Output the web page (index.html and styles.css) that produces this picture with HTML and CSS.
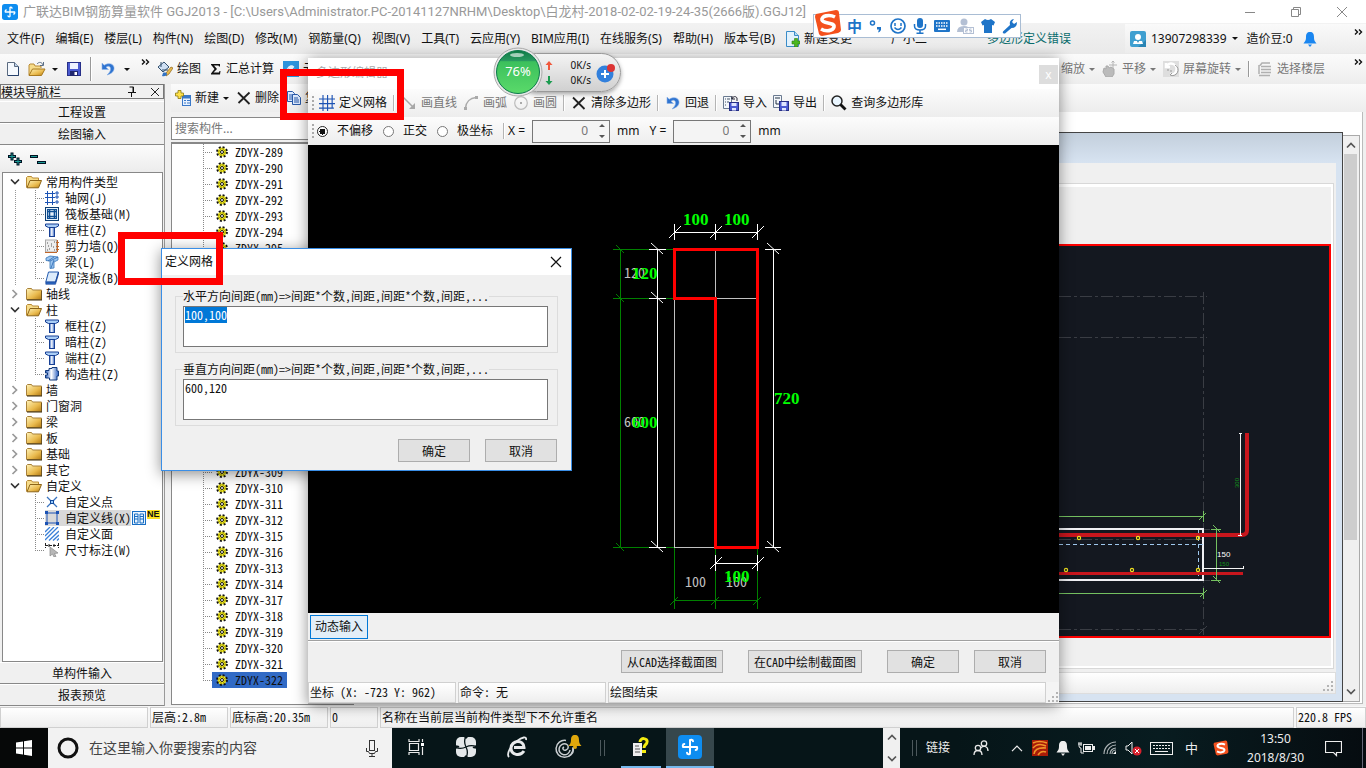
FILE: index.html
```html
<!DOCTYPE html>
<html lang="zh-CN">
<head>
<meta charset="utf-8">
<title>广联达BIM钢筋算量软件 GGJ2013</title>
<link rel="stylesheet" href="styles.css">
</head>
<body>
<svg class="defs" width="0" height="0" aria-hidden="true">
  <defs>
    <linearGradient id="gFold" x1="0" y1="0" x2="1" y2="1"><stop offset="0" stop-color="#fff3b8"/><stop offset=".6" stop-color="#e9b94c"/><stop offset="1" stop-color="#b27a14"/></linearGradient>
    <linearGradient id="gBlue" x1="0" x2="1"><stop offset="0" stop-color="#2a5fc0"/><stop offset=".45" stop-color="#fff"/><stop offset="1" stop-color="#2a5fc0"/></linearGradient>
    <linearGradient id="gBall" x1="0" y1="0" x2="0" y2="1"><stop offset="0" stop-color="#0d7a45"/><stop offset=".24" stop-color="#2a9a60"/><stop offset=".26" stop-color="#3cc05c"/><stop offset="1" stop-color="#5ada6a"/></linearGradient>
  </defs>
  <symbol id="logo" viewBox="0 0 24 24"><rect width="24" height="24" rx="4" fill="#0e8df0"/><path d="M12 5v13M12 5.500c0-1 3-1 3 .8M12 18.500c0 1-3 1-3-.8M5 12h14M5.500 12c-1 0-1-3 .8-3M18.500 12c1 0 1 3-.8 3" fill="none" stroke="#fff" stroke-width="2" stroke-linecap="round"/></symbol>
  <symbol id="gear" viewBox="0 0 12 12"><circle cx="6" cy="6" r="4.500" fill="#f4ec20"/><circle cx="6" cy="6" r="5" fill="none" stroke="#111" stroke-width="1.800" stroke-dasharray="2 1.930"/><circle cx="6" cy="6" r="3.200" fill="none" stroke="#6d6a00" stroke-width="1" stroke-dasharray="1.500 1"/><circle cx="6" cy="6" r="1.500" fill="#fff" stroke="#111"/></symbol>
  <symbol id="fold" viewBox="0 0 16 14"><path d="M.5 12.500v-10l1-1h4l1 1.500h9v9.500z" fill="url(#gFold)" stroke="#a8813a"/><path d="M1 13h15V4" fill="none" stroke="#3a2a08"/></symbol>
  <symbol id="foldo" viewBox="0 0 16 14"><path d="M.5 12.500v-10l1-1h4l1 1.500h6v2" fill="#f6dc8a" stroke="#b98a35"/><path d="M1 12.800L4 5.500h11.500l-3 7.300z" fill="url(#gFold)" stroke="#8c6418"/></symbol>
  <symbol id="open" viewBox="0 0 18 16"><path d="M1 14V4l1-1h4l1 2h6v2" fill="#f6dc8a" stroke="#b98a35"/><path d="M1 14.500L4.500 8H17l-3.500 6.500z" fill="url(#gFold)" stroke="#a87a20"/><path d="M9 3c2-2.500 5-2 6 1M15.500 1v3.500H12" fill="none" stroke="#5b6f86"/></symbol>
  <symbol id="new" viewBox="0 0 12 14"><path d="M.5.500h7l4 4v9H.5z" fill="#f5f9fe" stroke="#5b6b80"/><path d="M7.500.500v4h4" fill="#bcd0ea" stroke="#5b6b80"/><path d="M11.500 5v8.500H1" fill="none" stroke="#25406b"/></symbol>
  <symbol id="save" viewBox="0 0 14 14"><rect x=".5" y=".5" width="13" height="13" fill="#4a5ad0" stroke="#272f88"/><rect x="3" y="1" width="8" height="6" fill="#eef2ff"/><rect x="3" y="9" width="8" height="5" fill="#20276e"/><rect x="7.500" y="10" width="2.500" height="3" fill="#fff"/></symbol>
  <symbol id="undo" viewBox="0 0 14 14"><path d="M1 1v6.500h6.500L5 5.300C7 3.500 9.500 4 9.500 7c0 2.500-1.500 4-3.500 6 5-1.500 7.500-4 7-7.500C12.500 1.500 7.500.500 3.200 3.200z" fill="#2f74d0" stroke="#8db4ea" stroke-width=".6"/></symbol>
  <symbol id="paint" viewBox="0 0 16 16"><path d="M1 6l6-5 5 5-6 5z" fill="#cfe0f4" stroke="#32506e"/><path d="M4 1v5M5 9h6" stroke="#32506e" fill="none"/><path d="M9 12l5-6 2 1-4 6-3 2z" fill="#e9b94c" stroke="#8c6418" stroke-width=".7"/><path d="M6 12c2-1 4 0 4 1s-2 3-5 2" fill="#3273c4"/></symbol>
  <symbol id="sigma" viewBox="0 0 12 12"><path d="M1 1h9v2.500H9L8.500 2.500H4L7 6l-3.500 3.500H9l.5-1.500h1L10 11.500H1V10.500L4.500 6 1 1.800z" fill="#111"/></symbol>
  <symbol id="cloud" viewBox="0 0 16 16"><rect width="16" height="16" fill="#2d93dc"/><path d="M1 12c0-4 3-3 4-6 4-4 8 0 7 3 3 0 3 4 0 4H3z" fill="#dff0fb"/><path d="M5 8l3 3 6-7" fill="none" stroke="#2d93dc" stroke-width="1.500"/></symbol>
  <symbol id="addnew" viewBox="0 0 16 16"><rect x="7.500" y="5.500" width="8" height="10" fill="#e8f2ff" stroke="#3a78c8"/><path d="M7 6h9v2.500H7z" fill="#3a78c8"/><path d="M9 10.500h2m1 0h3m-6 2.500h2m1 0h3" stroke="#3a78c8"/><path d="M3 .5h3v2.500h2.500v3H6v2.500H3V6H.5V3H3z" fill="#ffe14a" stroke="#8c7a10" stroke-width=".8"/></symbol>
  <symbol id="x" viewBox="0 0 14 14"><path d="M1 1.500L12.500 13M12.500 1.500L1.500 12" fill="none" stroke="#222" stroke-width="1.800"/></symbol>
  <symbol id="copy" viewBox="0 0 14 14"><path d="M.5.500h5l2 2v8h-7z" fill="#dceaff" stroke="#2859a8"/><path d="M2 4h4M2 6h4M2 8h4" stroke="#2859a8"/><path d="M5.500 3.500h5l3 3v7h-8z" fill="#dceaff" stroke="#2859a8"/><path d="M7 7h4M7 9h5M7 11h5" stroke="#2859a8"/></symbol>
  <symbol id="grid" viewBox="0 0 14 14"><path d="M3.500 0v14M7.500 0v14M11.500 0v12M0 3.500h14M0 7.500h14M0 11.500h13" fill="none" stroke="#1c53b4"/></symbol>
  <symbol id="axis" viewBox="0 0 14 14"><path d="M2.500 0v14M7.500 0v14M0 2.500h10M0 6.500h10M0 11.500h10" fill="none" stroke="#1c53b4"/><path d="M11 1h2v2h-2zM11 5h2v2h-2zM11 10h2v2h-2z" fill="none" stroke="#1c53b4"/></symbol>
  <symbol id="raft" viewBox="0 0 14 14"><rect x=".5" y=".5" width="13" height="13" fill="#e6f0fa" stroke="#0f3f74"/><path d="M4.500 2v10M9.500 2v10M2 4.500h10M2 9.500h10" fill="none" stroke="#0f4f94" stroke-width="1.600"/><rect x="2.500" y="2.500" width="9" height="9" fill="none" stroke="#0f4f94"/></symbol>
  <symbol id="col" viewBox="0 0 14 14"><rect x="4.500" y="4" width="5" height="9.500" fill="url(#gBlue)" stroke="#173f94"/><path d="M.5 1h13v2l-3 1.500h-7L.5 3z" fill="#a9cdf6" stroke="#173f94"/></symbol>
  <symbol id="wall" viewBox="0 0 14 14"><rect x=".5" y="1" width="11" height="12" fill="#eee" stroke="#aaa"/><path d="M2 4h1m3 1h1m2-2h1M3 7h1m4 1h1m-5 2h1m4 1h1M2 11h1m3-4h1" stroke="#555"/><path d="M0 13.500h12M12.500 1v12M11 3.500h3M11 7.500h3M11 10.500h3" stroke="#c0662a" fill="none"/></symbol>
  <symbol id="beam" viewBox="0 0 14 14"><path d="M1 3l4-2 8 1v3L9 7v6l-4 .5V6L1 5.500z" fill="#9cc6f0" stroke="#3473b8" stroke-width=".8"/><path d="M5 6l8-4M3 6l6-4M6 13l3-8" stroke="#2a66b0" fill="none" stroke-width=".8"/></symbol>
  <symbol id="slab" viewBox="0 0 14 14"><path d="M3.500 1h10L10.500 11H.8z" fill="#dcebfb" stroke="#245cb0"/><path d="M.8 11v2.300h9.700l3-10V1L10.500 11z" fill="#2a66c0" stroke="#173f94" stroke-width=".6"/></symbol>
  <symbol id="gz" viewBox="0 0 14 14"><path d="M4 1.500h3V.5h5v3.500h1.500v5H12v4H4.500v-2H.5v-3h2V6h-2V3.500H4z" fill="url(#gBlue)" stroke="#123a7c"/></symbol>
  <symbol id="pt" viewBox="0 0 14 14"><path d="M2 2l3.500 3.500M12 2L8.500 5.500M2 12l3.500-3.500M12 12L8.500 8.500" stroke="#3a74c0" stroke-width="1.300"/><rect x="5.500" y="5.500" width="3" height="3" fill="#9cf" stroke="#124a9c"/></symbol>
  <symbol id="ln" viewBox="0 0 14 14"><path d="M2 2h10v10H2z" fill="none" stroke="#1c53b4"/><path d="M0 0h3v3H0zM11 0h3v3h-3zM0 11h3v3H0zM11 11h3v3h-3z" fill="#1c53b4"/></symbol>
  <symbol id="area" viewBox="0 0 14 14"><path d="M0 5l5-5M0 9l9-9M0 13L13 0M4 13.500L14 4M8 13.500L14 8M12 13.500l2-2" stroke="#3a80d8" stroke-width="1.300"/></symbol>
  <symbol id="dim" viewBox="0 0 14 14"><path d="M.5 0v5M13.500 0v5M0 2.500h14M4 1v3M9 1v3" stroke="#222" stroke-dasharray="3 1"/><path d="M5 4l8 6-3.500.5 1.500 3-2 .5-1.500-3L5 13z" fill="#b8b8b8" stroke="#888" stroke-width=".7"/></symbol>
  <symbol id="book" viewBox="0 0 14 14"><rect x=".5" y=".5" width="13" height="13" fill="#e8f4ff" stroke="#1a6fc4"/><path d="M2.500 3h3.500v9H2.500zM8 3h3.500v9H8zM2.500 5.500H6M8 5.500h3.500M2.500 8H6M8 8h3.500" fill="none" stroke="#1a6fc4"/></symbol>
  <symbol id="line" viewBox="0 0 14 14"><path d="M1 1l10 10" stroke="#a8a8a8" stroke-width="1.500"/><path d="M13 7v6H7z" fill="#a8a8a8"/></symbol>
  <symbol id="arc" viewBox="0 0 14 14"><path d="M1.500 12C2 6 6 2 12 1.500" fill="none" stroke="#aaa" stroke-width="1.500"/><path d="M0 11h3v3H0zM11 0h3v3h-3z" fill="#aaa"/></symbol>
  <symbol id="circ" viewBox="0 0 14 14"><circle cx="7" cy="7" r="6.300" fill="none" stroke="#bbb" stroke-width="1.200"/><path d="M6 6h2v2H6z" fill="#aaa"/></symbol>
  <symbol id="imp" viewBox="0 0 16 16"><path d="M.5 1.500h8v12h-8z" fill="#f4f7fb" stroke="#6a7a90"/><path d="M2 4h1m1 0h3M2 7h1m1 0h2M2 10h1" stroke="#456"/><rect x="6.500" y="7.500" width="9" height="8" fill="#4a5ad0" stroke="#272f88"/><path d="M8.500 8h5v3h-5zM9 13h4v2.500H9z" fill="#dfe6ff"/><path d="M9 4c1-3 4-3 5-1M9 1v3h3M14 3v3" stroke="#223" fill="none"/></symbol>
  <symbol id="exp" viewBox="0 0 16 16"><path d="M.5.500h8v12h-8z" fill="#f4f7fb" stroke="#6a7a90"/><path d="M2 3h5M3 5v4h5M6 7l2 2-2 2" fill="none" stroke="#234"/><rect x="6.500" y="6.500" width="9" height="9" fill="#4a5ad0" stroke="#272f88"/><path d="M8.500 7h5v4h-5zM9 13h4v2.500H9z" fill="#dfe6ff"/></symbol>
  <symbol id="find" viewBox="0 0 16 16"><circle cx="6" cy="6" r="5" fill="#eaf6ff" stroke="#222" stroke-width="1.500"/><path d="M9.500 9.500l5 5" stroke="#111" stroke-width="2.800"/></symbol>
  <symbol id="hand" viewBox="0 0 16 16"><path d="M2 7l2 1V5h2l1 2 2-1 3 2v5l-2 3H4l-3-5z" fill="#bbb" stroke="#aaa"/><path d="M11 0v8M7 4h8M9.500 1.500L11 0l1.500 1.500" stroke="#b4b4b4" fill="none"/></symbol>
  <symbol id="rot" viewBox="0 0 16 16"><rect width="16" height="16" fill="#dedede"/><path d="M3 6a5.500 5.500 0 1 1 4 7.500M3 2v4h4" fill="none" stroke="#fff" stroke-width="2.500"/><path d="M12 4a5.500 5.500 0 0 1-5 10l2-2M4 9h2m1 1h2" fill="none" stroke="#999"/></symbol>
  <symbol id="floors" viewBox="0 0 16 16"><path d="M3 4.500L5 2h8M4 5.500h10M4 8.500h10M4 11.500h10M2 14.500h11M2 4v9" fill="none" stroke="#b0b0b0" stroke-width="1.500"/></symbol>
  <symbol id="docnew" viewBox="0 0 14 16"><path d="M.5.500h8l4 4v11H.5z" fill="#e2f2fd" stroke="#3a8cc8"/><path d="M8.500.500v4h4" fill="#b4dcf4" stroke="#3a8cc8"/><path d="M8.500 7.500h3v2.500H14v3h-2.500V16h-3v-3H6v-3h2.500z" fill="#4ab820" stroke="#2c7a10" stroke-width=".6"/></symbol>
  <symbol id="user" viewBox="0 0 16 16"><rect width="16" height="16" rx="2" fill="#3f9fd0"/><path d="M8 16l8-7v7z" fill="#2a84b4"/><circle cx="8" cy="6" r="3" fill="#fff"/><path d="M3 13l1-3h8l1 3z" fill="#fff"/><path d="M7 10l1 2 1-2z" fill="#2a84b4"/></symbol>
  <symbol id="bell" viewBox="0 0 14 16"><path d="M7 1c-3 0-4 2-4 5 0 4-1 4-2.500 6.500h13C12 10 11 10 11 6c0-3-1-5-4-5z" fill="currentColor"/><path d="M5 13.500h4L7 16z" fill="currentColor"/></symbol>
  <symbol id="chev" viewBox="0 0 10 8"><path d="M1 1.500l4 4 4-4" fill="none" stroke="currentColor" stroke-width="1.700"/></symbol>
  <symbol id="tri" viewBox="0 0 6 3"><path d="M0 0h6L3 3z" fill="currentColor"/></symbol>
  <symbol id="more" viewBox="0 0 9 6"><path d="M1 .5L3.500 3 1 5.500M5 .5L7.500 3 5 5.500" fill="none" stroke="#111" stroke-width="1.400"/></symbol>
  <symbol id="sogou" viewBox="0 0 28 28"><path d="M2 5L22 1q3 0 3 3l2 17q0 2-3 3L8 27q-2 0-3-2L1 8q0-2 1-3z" fill="#f4511e"/><path d="M21 8C15 5 7 7 8 11s13 2 12 7c-1 4-8 5-13 2" fill="none" stroke="#fff" stroke-width="3.600"/></symbol>
  <symbol id="grip" viewBox="0 0 11 11"><path d="M8 0h2v2H8zM4 4h2v2H4zM8 4h2v2H8zM0 8h2v2H0zM4 8h2v2H4zM8 8h2v2H8z" fill="#b4b4b4"/></symbol>
  <symbol id="updown" viewBox="0 0 6 16"><path d="M0 4l3-3 3 3zM0 12l3 3 3-3z" fill="#555"/></symbol>
</svg>

<div class="desktop">
  <main class="app">
    <header class="titlebar">
      <svg width="16" height="16"><use href="#logo"/></svg>
      <h1>广联达BIM钢筋算量软件 GGJ2013 - [C:\Users\Administrator.PC-20141127NRHM\Desktop\白龙村-2018-02-02-19-24-35(2666版).GGJ12]</h1>
      <div class="winbtns">
        <button aria-label="最小化"><svg width="12" height="12"><path d="M1 6.500h10" stroke="#888"/></svg></button>
        <button aria-label="还原"><svg width="12" height="12"><path d="M1.500 3.500h7v7h-7zM3.500 3V1.500h7v7H9" fill="none" stroke="#888"/></svg></button>
        <button aria-label="关闭"><svg width="12" height="12"><path d="M1 1l10 10M11 1L1 11" stroke="#888"/></svg></button>
      </div>
    </header>

    <nav class="menubar">
      <div class="menus">
        <button>文件(F)</button><button>编辑(E)</button><button>楼层(L)</button><button>构件(N)</button><button>绘图(D)</button><button>修改(M)</button><button>钢筋量(Q)</button><button>视图(V)</button><button>工具(T)</button><button>云应用(Y)</button><button>BIM应用(I)</button><button>在线服务(S)</button><button>帮助(H)</button><button>版本号(B)</button>
        <button class="tb"><svg width="14" height="16"><use href="#docnew"/></svg>新建变更</button>
        <button class="agent">广小二</button>
      </div>
      <div class="notice">多边形定义错误</div>
      <div class="account">
        <svg width="16" height="16"><use href="#user"/></svg><span>13907298339</span>
        <svg width="6" height="3"><use href="#tri"/></svg><span class="beans">造价豆:0</span>
        <svg class="bluebell" width="14" height="16"><use href="#bell"/></svg>
        <svg class="more" width="9" height="6"><use href="#more"/></svg>
      </div>
    </nav>

    <div class="toolbar">
      <div class="group files">
        <button aria-label="新建"><svg width="12" height="14"><use href="#new"/></svg></button>
        <button class="drop" aria-label="打开"><svg width="18" height="16"><use href="#open"/></svg><svg width="6" height="3"><use href="#tri"/></svg></button>
        <button aria-label="保存"><svg width="14" height="14"><use href="#save"/></svg></button>
        <i class="sep"></i>
        <button class="drop wide" aria-label="撤销"><svg width="14" height="14"><use href="#undo"/></svg><svg width="6" height="3"><use href="#tri"/></svg></button>
        <svg class="more" width="9" height="6"><use href="#more"/></svg>
      </div>
      <div class="group calc">
        <button class="tb"><svg width="16" height="16"><use href="#paint"/></svg>绘图</button>
        <button class="tb"><svg width="12" height="12"><use href="#sigma"/></svg>汇总计算</button>
        <button class="tb"><svg width="16" height="16"><use href="#cloud"/></svg>云检查</button>
      </div>
      <div class="group view">
        <button class="tb off">缩放<svg width="6" height="3"><use href="#tri"/></svg></button>
        <button class="tb off"><svg width="16" height="16"><use href="#hand"/></svg>平移<svg width="6" height="3"><use href="#tri"/></svg></button>
        <button class="tb off"><svg width="16" height="16"><use href="#rot"/></svg>屏幕旋转<svg width="6" height="3"><use href="#tri"/></svg></button>
        <i class="sep"></i>
        <button class="tb off"><svg width="16" height="16"><use href="#floors"/></svg>选择楼层</button>
        <svg class="more" width="9" height="6"><use href="#more"/></svg>
      </div>
    </div>

    <div class="work">
      <aside class="navpane">
        <div class="navhead"><h2 class="song">模块导航栏</h2>
          <svg width="8" height="11"><path d="M1.500 1h4v5M5 1v5M0 6.500h8M3.500 7v4" fill="none" stroke="#111"/></svg>
          <svg width="10" height="10"><path d="M1 1l8 8M9 1L1 9" stroke="#222"/></svg></div>
        <button class="navbtn song">工程设置</button>
        <button class="navbtn song">绘图输入</button>
        <div class="plusbar">
          <svg width="18" height="16"><path d="M2 5.500h8M6 1.500v8M8 10.500h8M12 6.500v8" stroke="#012" stroke-width="3"/><path d="M3 5.500h6M6 2.500v6M9 10.500h6M12 7.500v6" stroke="#1a9a94"/></svg>
          <svg width="18" height="16"><path d="M1 5.500h8M8 11.500h9" stroke="#012" stroke-width="3"/><path d="M2 5.500h6M9 11.500h7" stroke="#1a9a94"/></svg>
        </div>
        <ul class="tree song">
          <li><div class="row"><svg class="ex" width="10" height="8"><use href="#chev"/></svg><svg width="16" height="14"><use href="#foldo"/></svg><span>常用构件类型</span></div>
            <ul class="run">
              <li><i class="conn"></i><svg width="14" height="14"><use href="#axis"/></svg><span>轴网(J)</span></li>
              <li><i class="conn"></i><svg width="14" height="14"><use href="#raft"/></svg><span>筏板基础(M)</span></li>
              <li><i class="conn"></i><svg width="14" height="14"><use href="#col"/></svg><span>框柱(Z)</span></li>
              <li><i class="conn"></i><svg width="14" height="14"><use href="#wall"/></svg><span>剪力墙(Q)</span></li>
              <li><i class="conn"></i><svg width="14" height="14"><use href="#beam"/></svg><span>梁(L)</span></li>
              <li><i class="conn"></i><svg width="14" height="14"><use href="#slab"/></svg><span>现浇板(B)</span></li>
            </ul></li>
          <li><div class="row"><svg class="ex shut" width="10" height="8"><use href="#chev"/></svg><svg width="16" height="14"><use href="#fold"/></svg><span>轴线</span></div></li>
          <li><div class="row"><svg class="ex" width="10" height="8"><use href="#chev"/></svg><svg width="16" height="14"><use href="#foldo"/></svg><span>柱</span></div>
            <ul class="run">
              <li><i class="conn"></i><svg width="14" height="14"><use href="#col"/></svg><span>框柱(Z)</span></li>
              <li><i class="conn"></i><svg width="14" height="14"><use href="#col"/></svg><span>暗柱(Z)</span></li>
              <li><i class="conn"></i><svg width="14" height="14"><use href="#col"/></svg><span>端柱(Z)</span></li>
              <li><i class="conn"></i><svg width="14" height="14"><use href="#gz"/></svg><span>构造柱(Z)</span></li>
            </ul></li>
          <li><div class="row"><svg class="ex shut" width="10" height="8"><use href="#chev"/></svg><svg width="16" height="14"><use href="#fold"/></svg><span>墙</span></div></li>
          <li><div class="row"><svg class="ex shut" width="10" height="8"><use href="#chev"/></svg><svg width="16" height="14"><use href="#fold"/></svg><span>门窗洞</span></div></li>
          <li><div class="row"><svg class="ex shut" width="10" height="8"><use href="#chev"/></svg><svg width="16" height="14"><use href="#fold"/></svg><span>梁</span></div></li>
          <li><div class="row"><svg class="ex shut" width="10" height="8"><use href="#chev"/></svg><svg width="16" height="14"><use href="#fold"/></svg><span>板</span></div></li>
          <li><div class="row"><svg class="ex shut" width="10" height="8"><use href="#chev"/></svg><svg width="16" height="14"><use href="#fold"/></svg><span>基础</span></div></li>
          <li><div class="row"><svg class="ex shut" width="10" height="8"><use href="#chev"/></svg><svg width="16" height="14"><use href="#fold"/></svg><span>其它</span></div></li>
          <li><div class="row"><svg class="ex" width="10" height="8"><use href="#chev"/></svg><svg width="16" height="14"><use href="#foldo"/></svg><span>自定义</span></div>
            <ul>
              <li><i class="conn"></i><svg width="14" height="14"><use href="#pt"/></svg><span>自定义点</span></li>
              <li class="cur"><i class="conn"></i><div class="hl"><svg width="14" height="14"><use href="#ln"/></svg><span>自定义线(X)</span></div><svg width="14" height="14"><use href="#book"/></svg><b class="newtag">NE</b></li>
              <li><i class="conn"></i><svg width="14" height="14"><use href="#area"/></svg><span>自定义面</span></li>
              <li><i class="conn"></i><svg width="14" height="14"><use href="#dim"/></svg><span>尺寸标注(W)</span></li>
            </ul></li>
        </ul>
        <button class="navbtn song">单构件输入</button>
        <button class="navbtn song">报表预览</button>
      </aside>

      <div class="stage">
        <div class="toolbar listbar">
          <button class="tb"><svg width="16" height="16"><use href="#addnew"/></svg>新建<svg width="6" height="3"><use href="#tri"/></svg></button>
          <button class="tb"><svg width="14" height="14"><use href="#x"/></svg>删除</button>
          <button class="tb"><svg width="14" height="14"><use href="#copy"/></svg>复制</button>
        </div>
        <div class="split">
          <section class="listpane">
            <input class="search" type="text" placeholder="搜索构件..." aria-label="搜索构件">
            <ul class="list song" id="componentList"></ul>
          </section>
          <section class="mdi">
            <div class="child">
              <div class="childbody">
                <div class="sheet">
                  <div class="cad">
                    <svg width="270" height="390" viewBox="1059 246 270 390" aria-label="截面配筋图">
                      <g fill="none" stroke="#3a3d44" stroke-dasharray="12 3 3 3"><path d="M1059 296.500h148M1059 337.500h148M1203.500 292v343M1059 539.500h144M1059 629.500h144"/></g>
                      <path d="M1199 634l8-8M1204 529.500h6M1204 580.500h6" stroke="#3a3d44"/>
                      <path d="M1059 529h144v51h-144" fill="none" stroke="#f0f0f4" stroke-width="2"/>
                      <path d="M1059 544.500h144M1198.500 530v50" fill="none" stroke="#9fc8ee" stroke-dasharray="4 3"/>
                      <path d="M1059 535h183q5 0 5-5v-97" fill="none" stroke="#c8161d" stroke-width="4"/>
                      <path d="M1059 573.500h184" stroke="#c8161d" stroke-width="3"/>
                      <path d="M1059 516.500h145M1203.500 511v11M1199 520l7-7M1059 593.500h145M1203.500 588v11M1200 597l7-7M1216.500 529v51M1211 529.500h10M1211 580.500h10M1213 525l7 7M1213 576l7 7" fill="none" stroke="#74c060"/>
                      <path d="M1240.500 433v102M1239 433.500h3M1238 535.500h4M1204 568.500h40M1203.500 566v5M1243.500 566v3" fill="none" stroke="#f4f4f4"/>
                      <g fill="none" stroke="#f0e020" stroke-width="1.200"><circle cx="1079" cy="538" r="1.600"/><circle cx="1138" cy="538" r="1.600"/><circle cx="1198" cy="538" r="1.600"/><circle cx="1066" cy="570" r="1.600"/><circle cx="1132" cy="570" r="1.600"/><circle cx="1198" cy="570" r="1.600"/></g>
                      <text x="1217" y="557" class="c8">150</text>
                      <text x="1219" y="566" class="c6">150</text>
                      <text x="1239" y="488" class="c6" transform="rotate(-90 1239 488)">300</text>
                    </svg>
                  </div>
                </div>
                <div class="childstatus"><svg width="11" height="11"><use href="#grip"/></svg></div>
              </div>
            </div>
            <div class="scroll">
              <button aria-label="向上滚动"><svg class="up" width="10" height="8"><use href="#chev"/></svg></button>
              <div class="thumb"></div>
              <button aria-label="向下滚动"><svg width="10" height="8"><use href="#chev"/></svg></button>
            </div>
          </section>
        </div>
      </div>
    </div>

    <footer class="status song">
      <span class="s1"></span><span class="s2">层高:2.8m</span><span class="s3">底标高:20.35m</span><span class="s4">0</span><span class="grow">名称在当前层当前构件类型下不允许重名</span><span class="s5">220.8 FPS</span>
    </footer>
  </main>

  <footer class="taskbar">
    <button class="start" aria-label="开始"><svg width="16" height="16"><path d="M0 2.500L7 1.500v6H0zM8 1.300L16 0v7.500H8zM0 8.500h7v6L0 13.500zM8 8.500h8V16l-8-1.200z" fill="#fff"/></svg></button>
    <label class="cortana"><svg width="22" height="22"><circle cx="11" cy="11" r="9" fill="none" stroke="#111" stroke-width="3"/></svg><input type="text" placeholder="在这里输入你要搜索的内容">
      <svg width="12" height="17"><rect x="3.500" y=".5" width="5" height="10" fill="none" stroke="#333"/><path d="M.5 8v3.500h2l1 2h5l1-2h2V8M6 14v2.500M3 16.500h6" fill="none" stroke="#333"/></svg></label>
    <div class="apps">
      <button aria-label="任务视图"><svg width="18" height="16"><path d="M2.500 4.500h9v7h-9zM2 0v2.500h10V0M2 16v-2.500h10V16M15.500 0v3M15.500 8v8" fill="none" stroke="#e8e8e8" stroke-width="1.200"/><path d="M14 4h3v3h-3z" fill="#fff"/></svg></button>
      <button aria-label="四叶草"><svg width="22" height="22"><rect x="1" y="1" width="20" height="20" rx="5" fill="#e4e8ea"/><path d="M11 0c-2 4-2 7 0 11s2 7 0 11M0 11c4 2 7 2 11 0s7-2 11 0M1 11c1-1 2-1 3 0M18 11c1 1 2 1 3 0" fill="none" stroke="#061518" stroke-width="1.300"/><path d="M11 0l2 1-2 2-2-2zM11 22l2-1-2-2-2 2zM0 11l1 2 2-2-2-2zM22 11l-1 2-2-2 2-2z" fill="#061518"/></svg></button>
      <button aria-label="浏览器"><svg width="22" height="22"><path d="M18 15c-4 6-13 4-13-3 0-8 13-9 13-.5H8" fill="none" stroke="#e8eaec" stroke-width="3"/><path d="M3 21c-3-3 2-12 8-16 5-4 10-5 9-1" fill="none" stroke="#e8eaec" stroke-width="1.800"/></svg></button>
      <button aria-label="安全浏览"><svg width="28" height="26"><g fill="none" stroke="#c8cdd0" stroke-width="1.500"><path d="M19 14a8.500 8.500 0 1 1-7-7.500"/><path d="M16 16a5.500 5.500 0 1 1-4-6c3 1 3 5 0 6s-4-2-2-3"/><path d="M15 22c4-2 5-5 4-9"/></g><g fill="#e0a80c"><path d="M21 1c-3 0-4 2-4 5 0 3-1 4-2.500 6h13C26 10 25 9 25 6c0-3-1-5-4-5z"/><circle cx="21" cy="13" r="2"/></g></svg></button>
      <i class="bars"></i>
      <button class="run" aria-label="帮助文档"><svg width="18" height="20"><path d="M1 6h9v13H1z" fill="#eee"/><path d="M3 9h4M3 12h5M3 15h5" stroke="#555"/><path d="M8 5c0-5 8-4 7 0 0 3-3 2-3 6" fill="none" stroke="#f4ec10" stroke-width="3"/><path d="M10 13h4v3h-4z" fill="#f4ec10"/></svg></button>
      <button class="run on" aria-label="GGJ2013"><svg width="24" height="24"><use href="#logo"/></svg></button>
    </div>
    <div class="tscroll"><svg class="up" width="10" height="8"><use href="#chev"/></svg><svg width="10" height="8"><use href="#chev"/></svg></div>
    <div class="tray">
      <i class="bars"></i><span class="links">链接</span>
      <svg width="16" height="16"><g fill="none" stroke="#e8e8e8" stroke-width="1.300"><circle cx="11" cy="3.500" r="2.700"/><circle cx="5" cy="8" r="2.700"/><path d="M1 15c0-6 8-6 8 0M8 8c2-3 7-2 7 3"/></g></svg>
      <svg class="up" width="14" height="10" viewBox="0 0 10 8"><path d="M1 1.500l4 4 4-4" fill="none" stroke="#eee"/></svg>
      <svg width="16" height="16"><rect width="16" height="16" fill="#a81c08"/><path d="M1 3q6-3 14 0M1 8q5-6 13-2M2 14q1-7 12-6M6 15q3-5 8-3" fill="none" stroke="#f0962a" stroke-width="1.500"/></svg>
      <svg width="14" height="16"><use href="#bell"/></svg>
      <svg width="17" height="14"><path d="M0 3h4M1 1v4q0 2 2 2v5h3M3 1v4" fill="none" stroke="#eee"/><rect x="5.500" y="3.500" width="9" height="7" fill="none" stroke="#eee"/><path d="M7 5h6v4H7zM15 5h2v4h-2z" fill="#eee"/></svg>
      <svg width="14" height="14"><path d="M1 13A12 12 0 0 1 13 1M4 13a9 9 0 0 1 9-9M7 13a6 6 0 0 1 6-6M9 13a4 4 0 0 1 4-4" fill="none" stroke="#aeb4b6" stroke-width="1.200"/><path d="M10 13h3v-3z" fill="#fff"/></svg>
      <svg width="17" height="15"><path d="M1 5h2l4-4v12L3 9H1z" fill="none" stroke="#eee"/><circle cx="12" cy="10" r="4.500" fill="#d8202c"/><path d="M10 8l4 4M14 8l-4 4" stroke="#fff"/></svg>
      <svg width="23" height="13"><rect x=".5" y=".5" width="22" height="12" fill="none" stroke="#eee"/><path d="M3 3.500h17M3 6.500h17" stroke="#eee" stroke-dasharray="2 1"/><path d="M5 9.500h13" stroke="#eee"/></svg>
      <span class="ime">中</span>
      <svg width="16" height="16"><use href="#sogou"/></svg>
      <div class="clock"><time>13:50</time><span>2018/8/30</span></div>
      <svg width="17" height="17"><path d="M.5 1.500h16v11h-5v3l-3-3h-8z" fill="none" stroke="#eee" stroke-width="1.200"/></svg>
      <i class="peek"></i>
    </div>
  </footer>

  <section class="editor" role="dialog" aria-label="多边形编辑器">
    <header><h2>多边形编辑器</h2><button aria-label="关闭">x</button></header>
    <div class="edbar">
      <i class="dots"></i>
      <button class="tb"><svg width="16" height="16"><use href="#grid"/></svg>定义网格</button><i class="sep"></i>
      <button class="tb off"><svg width="16" height="14"><use href="#line"/></svg>画直线</button>
      <button class="tb off"><svg width="16" height="14"><use href="#arc"/></svg>画弧</button>
      <button class="tb off"><svg width="16" height="14"><use href="#circ"/></svg>画圆</button><i class="sep"></i>
      <button class="tb"><svg width="16" height="14"><use href="#x"/></svg>清除多边形</button><i class="sep"></i>
      <button class="tb"><svg width="16" height="14"><use href="#undo"/></svg>回退</button><i class="sep"></i>
      <button class="tb"><svg width="16" height="16"><use href="#imp"/></svg>导入</button>
      <button class="tb"><svg width="16" height="16"><use href="#exp"/></svg>导出</button><i class="sep"></i>
      <button class="tb"><svg width="16" height="16"><use href="#find"/></svg>查询多边形库</button>
    </div>
    <div class="edbar coords">
      <i class="dots"></i>
      <label><input type="radio" name="mode" checked>不偏移</label>
      <label><input type="radio" name="mode">正交</label>
      <label><input type="radio" name="mode">极坐标</label>
      <i class="sep"></i>
      <label class="axis">X = <span class="spin"><input type="text" value="0" disabled><svg width="8" height="20" viewBox="0 -2 6 20"><use href="#updown" width="6" height="16"/></svg></span>mm</label>
      <label class="axis">Y = <span class="spin"><input type="text" value="0" disabled><svg width="8" height="20" viewBox="0 -2 6 20"><use href="#updown" width="6" height="16"/></svg></span>mm</label>
    </div>
    <div class="canvas">
      <svg width="751" height="468" viewBox="308 145 751 468" aria-label="多边形截面">
        <g fill="none" stroke="#008000">
          <path d="M613 249.500h61M613 298.500h61M613 547.500h61M620.500 249v299M674.500 548v61M715.500 548v61M757.500 548v61M674 600.500h84"/>
          <path d="M616 245l8 8M616 294l8 8M616 543l8 8M670 605l8-8M711 605l8-8M753 605l8-8"/>
        </g>
        <path d="M674.500 298v250M715.500 249v49M715 298.500h42M674 547.500h42" fill="none" stroke="#c0c0c0"/>
        <g class="gray"><text x="624" y="278">120</text><text x="624" y="427">600</text><text x="685" y="587">100</text><text x="726" y="587">100</text></g>
        <g fill="none" stroke="#fff">
          <path d="M674 232.500h84M674.500 224v16M715.500 224v16M757.500 224v16M657.500 249v299M649 249.500h17M649 298.500h17M649 547.500h17M773.500 249v299M765 249.500h16M765 547.500h16M715 563.500h43M715.500 555v16M757.500 555v16"/>
          <path d="M669 238l12-12M710 238l12-12M752 238l12-12M651 243l12 11M651 292l12 11M651 541l12 11M767 243l12 11M767 541l12 11M710 569l12-12M752 569l12-12"/>
        </g>
        <path d="M674.500 249.500h83v298h-42v-249h-41z" fill="none" stroke="#f00" stroke-width="3"/>
        <g class="green"><text x="683" y="225">100</text><text x="724" y="225">100</text><text x="632" y="279">120</text><text x="632" y="428">600</text><text x="774" y="404">720</text><text x="724" y="582">100</text></g>
      </svg>
    </div>
    <div class="dyn"><button>动态输入</button></div>
    <div class="actions song">
      <button>从CAD选择截面图</button><button>在CAD中绘制截面图</button><button class="std">确定</button><button class="std">取消</button>
    </div>
    <div class="edstatus song"><span class="e1">坐标 (X: -723 Y: 962)</span><span class="e1">命令: 无</span><span class="grow">绘图结束</span><svg width="11" height="11"><use href="#grip"/></svg></div>
  </section>

  <form class="griddlg song" role="dialog" aria-label="定义网格">
    <header><h2>定义网格</h2><button type="button" aria-label="关闭"><svg width="12" height="12"><path d="M1 1l10 10M11 1L1 11" stroke="#111" stroke-width="1.200"/></svg></button></header>
    <fieldset><legend><label for="hgap">水平方向间距(mm)=&gt;间距*个数,间距,间距*个数,间距,...</label></legend><textarea id="hgap" class="song" spellcheck="false">100,100</textarea></fieldset>
    <fieldset><legend><label for="vgap">垂直方向间距(mm)=&gt;间距*个数,间距,间距*个数,间距,...</label></legend><textarea id="vgap" class="song" spellcheck="false">600,120</textarea></fieldset>
    <div class="btns"><button type="button">确定</button><button type="button">取消</button></div>
  </form>

  <div class="mark mark-a"></div>
  <div class="mark mark-b"></div>

  <div class="netball">
    <div class="pill">
      <div class="rates"><span><svg width="8" height="9"><path d="M4 0l3.500 4H5v5H3V4H.5z" fill="#f0583c"/></svg>0K/s</span><span><svg width="8" height="9"><path d="M4 9l3.500-4H5V0H3v5H.5z" fill="#1c9c50"/></svg>0K/s</span></div>
      <svg width="22" height="22"><circle cx="10" cy="12" r="8.500" fill="#3280dc"/><path d="M10 8v8M6 12h8" stroke="#fff" stroke-width="2"/><circle cx="16" cy="6" r="4" fill="#dc3434"/></svg>
    </div>
    <svg class="ball" width="50" height="50"><circle cx="25" cy="25" r="24" fill="#e8e8e8" stroke="#aaa"/><circle cx="25" cy="25" r="21.500" fill="url(#gBall)" stroke="#0d7a4c"/><ellipse cx="24" cy="8" rx="7" ry="2" fill="#fff" opacity=".6"/><text x="25" y="29" text-anchor="middle">76%</text></svg>
  </div>

  <div class="imebar">
    <svg width="28" height="28"><use href="#sogou"/></svg>
    <span>中</span>
    <svg width="14" height="14"><circle cx="3.500" cy="4" r="2" fill="none" stroke="#1e74c8" stroke-width="1.500"/><path d="M8 8h4v3q-1 2-3 2.500l1-3H8z" fill="#1e74c8"/></svg>
    <svg width="16" height="16"><circle cx="8" cy="8" r="7" fill="none" stroke="#1e74c8" stroke-width="1.700"/><path d="M5 5v3M11 5v3M4.500 9.500q3.500 4 7 0" fill="none" stroke="#1e74c8" stroke-width="1.500"/></svg>
    <svg width="14" height="16"><rect x="4" y="0" width="6" height="10" rx="3" fill="#1e74c8"/><path d="M1.500 6v2q0 4 5.500 4t5.500-4V6M7 12v3M3.500 15.200h7" fill="none" stroke="#1e74c8" stroke-width="1.500"/></svg>
    <svg width="16" height="12"><rect width="16" height="12" rx="1" fill="#1e74c8"/><path d="M2 3h12M2 6h12" stroke="#fff" stroke-width="1.500" stroke-dasharray="1.500 1"/><path d="M4 9.300h8" stroke="#fff" stroke-width="1.500"/></svg>
    <svg width="17" height="16"><g fill="#b4c0d4"><circle cx="7" cy="4" r="3.500"/><path d="M0 14q0-6 7-6 3 0 4 1H6v5z"/></g><rect x="6.500" y="9.500" width="10" height="6" fill="#fff" stroke="#b4c0d4"/><path d="M8.500 11h2v1.500h-2V14h2M14.500 11h-2v1.500h2V14h-2" fill="none" stroke="#b4c0d4"/></svg>
    <svg width="14" height="14"><path d="M4 0q3 2 6 0l4 3-1.500 3.500L11 6v8H3V6l-1.500.5L0 3z" fill="#1e74c8"/></svg>
    <svg width="15" height="15"><path d="M1 12.500L8 6q-1-4 2-5.500L12 0l-2 3 2 2 3-2q0 6-5.500 6L3 14.500q-3 0-2-2z" fill="#1e74c8"/></svg>
  </div>
</div>
<script src="main.js"></script>
</body>
</html>
```
FILE: main.js
```js
const order = [];
for (let n = 289; n <= 312; n++) order.push(n);
order.push(315, 316, 313, 314, 317, 318, 319, 320, 321, 322);

const list = document.getElementById('componentList');
list.innerHTML = order.map((n) =>
  `<li${n === 322 ? ' class="sel"' : ''}><i class="conn"></i><div class="item"><svg width="12" height="12"><use href="#gear"/></svg><span>ZDYX-${n}</span></div></li>`
).join('');

const first = document.getElementById('hgap');
first.focus();
first.select();
```
FILE: styles.css
```css
* { box-sizing: border-box; }
body { margin: 0; font: 12px/16px "Noto Sans", "Noto Sans CJK SC", sans-serif; color: #111; overflow: hidden; }
h1, h2, ul { margin: 0; padding: 0; font-size: 12px; font-weight: 400; list-style: none; }
button, input, textarea { font: inherit; color: inherit; margin: 0; }
button { border: 0; padding: 0; background: none; white-space: nowrap; }
svg { flex: none; display: block; }
.defs { position: absolute; }
.song { font-family: "Noto Sans CJK SC", sans-serif; font-feature-settings: "hwid"; }
.grow { flex: 1; }
.up { transform: rotate(180deg); }

.desktop { position: relative; height: 100vh; display: flex; flex-direction: column; }
.app { flex: 1; min-height: 0; display: flex; flex-direction: column; background: #f0f0f0; }

.titlebar { height: 23px; background: #fff; display: flex; align-items: center; gap: 5px; padding-left: 2px; color: #999; }
.titlebar h1 { flex: 1; white-space: nowrap; font-family: Roboto, "Noto Sans CJK SC", sans-serif; font-size: 13px; }
.winbtns { display: flex; gap: 34px; padding-right: 18px; }

.menubar { height: 31px; display: flex; align-items: center; background: linear-gradient(#f2f2f2, #e9e9e9); white-space: nowrap; }
.menus { display: flex; gap: 11px; padding-left: 7px; flex: 1; align-items: center; }
.agent { margin-left: 28px; }
.notice { color: #0a6c6c; padding-right: 54px; }
.account { display: flex; align-items: center; gap: 5px; height: 29px; width: 241px; padding-left: 5px; background: linear-gradient(#fafafa, #ececec); }
.beans { margin-left: 4px; }
.bluebell { color: #1a86f0; margin-left: 5px; }
.more { margin-left: auto; margin-right: 3px; align-self: flex-start; margin-top: 5px; }

.toolbar { height: 30px; display: flex; align-items: center; background: linear-gradient(#fbfbfb, #ededed); }
.group { display: flex; align-items: center; height: 100%; gap: 9px; }
.files { width: 153px; padding-left: 7px; }
.drop { display: flex; align-items: center; gap: 6px; }
.drop.wide { gap: 9px; }
.calc { flex: 1; padding-left: 4px; }
.view { width: 305px; gap: 7px; }
.tb { display: flex; align-items: center; gap: 4px; }
.off { color: #777; }
.sep { width: 2px; height: 16px; flex: none; background: #b4b4b4; border-right: 1px solid #fff; }
.toolbar .sep { height: 24px; background: #999; }
.view .sep { height: 16px; }

.work { flex: 1; min-height: 0; display: flex; }
.navpane { width: 165px; display: flex; flex-direction: column; border-right: 1px solid #999; }
.navhead { height: 15px; display: flex; align-items: center; border: 1px solid #777; padding-right: 3px; margin-bottom: 2px; gap: 14px; }
.navhead h2 { flex: 1; line-height: 13px; }
.navbtn { height: 22px; background: #f0f0f0; border-top: 1px solid #fff; border-bottom: 1px solid #888; }
.plusbar { height: 27px; display: flex; gap: 5px; align-items: center; padding-left: 6px; background: linear-gradient(#fcfcfc, #ececec); }
.tree { flex: 1; min-height: 0; overflow: hidden; background: #fff; border: 1px solid #888; margin: 0 1px 0 2px; padding-top: 1px; white-space: nowrap; }
.row, .tree ul li { display: flex; align-items: center; height: 16px; gap: 6px; }
.row { padding-left: 7px; gap: 4px; }
.ex { color: #333; margin-right: 2px; }
.ex.shut { transform: rotate(-90deg); color: #999; }
.tree ul { padding-left: 32px; }
.tree ul.run { background: repeating-linear-gradient(#999 0 1px, #fff 1px 2px) 12px 0 / 1px 100% no-repeat; }
.tree .conn { width: 9px; margin-right: -5px; }
.conn { height: 16px; flex: none; background: repeating-linear-gradient(#888 0 1px, transparent 1px 2px) 0 0 / 1px 100% no-repeat, repeating-linear-gradient(90deg, #888 0 1px, transparent 1px 2px) 0 8px / 100% 1px no-repeat; }
ul li:last-child > .conn { background-size: 1px 8px, 100% 1px; }
.tree ul .cur { gap: 1px; }
.tree .cur .conn { margin-right: 0; }
.hl { display: flex; align-items: center; gap: 6px; background: #d9d9d9; height: 16px; }
.newtag { background: #fbe122; font: bold 9px/9px "Liberation Sans", sans-serif; align-self: flex-start; }

.stage { flex: 1; min-width: 0; display: flex; flex-direction: column; padding-left: 6px; }
.listbar { height: 28px; gap: 8px; padding-left: 4px; }
.split { flex: 1; min-height: 0; display: flex; }
.listpane { width: 183px; display: flex; flex-direction: column; gap: 2px; padding: 5px 0 1px; }
.search { height: 23px; border: 1px solid #888; background: #fff; padding: 0 3px; width: 100%; }
.search::placeholder { color: #777; opacity: 1; }
.list { flex: 1; overflow: hidden; background: #fff; border: 1px solid #888; border-top-width: 2px; padding: 0 0 0 31px; }
.list li { display: flex; height: 16px; }
.list .conn { width: 9px; }
.item { display: flex; align-items: center; gap: 7px; padding: 0 4px; }
.sel .item { background: #316ac5; }

.mdi { flex: 1; display: flex; margin: 0 3px 2px 6px; padding: 20px 2px 1px 0; background: #fff; border-right: 1px solid #bbb; border-bottom: 1px solid #bbb; }
.child { flex: 1; display: flex; border: solid #444; border-width: 1px 1px 1px 0; background: linear-gradient(#c3cfdc, #d7e3f1 30px); padding: 30px 6px 7px 0; }
.childbody { flex: 1; display: flex; flex-direction: column; background: #f0f0f0; padding-top: 20px; }
.sheet { flex: 1; border: solid #d8d8d8; border-width: 1px 1px 1px 0; margin-right: 2px; box-shadow: inset 0 3px #fff, inset -2px 0 #fff, inset 0 -2px #fff; padding: 60px 2px 30px 0; display: flex; flex-direction: column; margin-bottom: 3px; }
.cad { flex: 1; min-height: 0; overflow: hidden; background: #141820; border: 2px solid #f00; display: flex; justify-content: flex-end; }
.c8 { font: 8px "Liberation Sans", sans-serif; fill: #fff; }
.c6 { font: 6px "Liberation Sans", sans-serif; fill: #12921c; }
.childstatus { height: 22px; background: linear-gradient(#fff, #eee); border: 1px solid #ddd; display: flex; justify-content: flex-end; align-items: flex-end; padding: 1px; }
.scroll { width: 17px; display: flex; flex-direction: column; background: #f0f0f0; border: solid #aaa; border-width: 1px 1px 1px 0; margin-top: 3px; color: #555; }
.scroll button { height: 18px; display: grid; place-items: center; }
.thumb { flex: 1; background: #cdcdcd; margin: 0 2px 143px 1px; }

.status { display: flex; height: 22px; background: #f6f6f6; gap: 2px; padding-top: 1px; }
.status span, .edstatus > span { border: 1px solid #d0d0d0; background: linear-gradient(#fff, #eee); padding-left: 1px; line-height: 18px; white-space: nowrap; }
.s1 { width: 148px; } .s2 { width: 78px; } .s3 { width: 98px; } .s4 { width: 48px; } .s5 { width: 70px; }

.taskbar { height: 40px; display: flex; background: linear-gradient(90deg, #061518 70%, #081c20 85%, #060c10); color: #eee; }
.taskbar button { display: grid; place-items: center; }
.start { width: 48px; background: #060808; }
.cortana { width: 344px; background: #f2f2f2; display: flex; align-items: center; gap: 10px; padding: 0 14px 0 9px; color: #333; }
.cortana input { flex: 1; min-width: 0; border: 0; background: none; font-size: 14px; padding: 0; }
.cortana input::placeholder { color: #444; opacity: 1; }
.apps { flex: 1; display: flex; align-items: stretch; }
.apps button { width: 51px; border-bottom: 2px solid transparent; }
.apps button:first-child { width: 48px; }
.bars { width: 5px; height: 16px; align-self: center; border: solid #4c585c; border-width: 0 1px; flex: none; }
.apps .bars { margin: 0 16px 0 7px; }
.apps .run { width: 40px; border-color: #76b9ed; margin-right: 5px; }
.apps .run.on { width: 48px; background: #36474c; }
.tscroll { width: 17px; background: #f0f0f0; color: #555; display: flex; flex-direction: column; justify-content: space-between; align-items: center; padding: 5px 0; }
.tray { width: 466px; display: flex; align-items: center; padding-left: 12px; gap: 8px; }
.links { margin: 0 15px 0 1px; }
.tray .links + svg { margin-right: 13px; }
.ime { font-size: 13px; padding: 0 7px 0 4px; }
.clock { margin: 0 12px 0 9px; text-align: center; display: flex; flex-direction: column; line-height: 19px; flex: 1; }
.peek { width: 4px; align-self: stretch; border-left: 1px solid #667; margin-left: 12px; flex: none; }

.editor { position: absolute; left: 308px; top: 58px; width: 751px; display: flex; flex-direction: column; background: #f0f0f0; box-shadow: 0 2px 14px rgba(0,0,0,.45); }
.editor header { height: 31px; background: #fff; display: flex; justify-content: space-between; padding: 7px 1px 5px 8px; color: #aaa; }
.editor header button { width: 19px; background: #ddd; color: #fff; line-height: 12px; }
.edbar { height: 28px; display: flex; align-items: center; gap: 6px; padding-left: 4px; background: linear-gradient(#fcfcfc, #ededed); white-space: nowrap; }
.dots { width: 2px; height: 15px; margin-right: -1px; flex: none; background: repeating-linear-gradient(#aaa 0 2px, transparent 2px 4px); }
.coords { gap: 10px; }
.coords .dots { margin-right: -7px; }
.coords label { display: flex; align-items: center; gap: 9px; }
.coords .sep { margin-right: -7px; }
.coords .axis { gap: 7px; }
input[type=radio] { appearance: none; width: 11px; height: 11px; border: 1px solid #777; border-radius: 50%; background: #fff; flex: none; }
input[type=radio]:checked { background: radial-gradient(#111 0 3px, #fff 3px); border-color: #222; }
.spin { width: 78px; height: 23px; border: 1px solid #777; display: flex; align-items: center; padding-right: 3px; background: #f4f4f4; }
.spin input { flex: 1; min-width: 0; border: 0; background: none; text-align: right; color: #777; padding: 0 10px 0 0; }
.canvas { height: 468px; background: #000; display: flex; justify-content: center; }
.gray { font: 14px "Noto Sans CJK SC", sans-serif; font-feature-settings: "hwid"; fill: #c0c0c0; }
.green { font: bold 17px "Liberation Serif", serif; fill: #0f0; }
.dyn { height: 28px; border-bottom: 1px solid #a0a0a0; padding: 2px; }
.dyn button { width: 58px; height: 24px; border: 1px solid #0078d7; background: #e2eef8; }
.actions { display: flex; justify-content: flex-end; gap: 25px; padding: 8px 13px 9px 0; border-top: 1px solid #fff; }
.actions button, .btns button { height: 23px; padding: 0 5px; border: 1px solid #adadad; background: #e1e1e1; }
.actions .std, .btns button { width: 72px; }
.actions button + .std + .std { margin-left: -10px; }
.edstatus { height: 22px; display: flex; gap: 2px; align-items: stretch; background: #f4f4f4; border-bottom: 1px solid #aaa; }
.edstatus svg { align-self: flex-end; }
.e1 { width: 148px; }

.griddlg { position: absolute; left: 161px; top: 248px; width: 411px; border: 1px solid #3a8ee6; background: #f0f0f0; box-shadow: 0 3px 14px rgba(0,0,0,.45); padding-bottom: 8px; }
.griddlg header { height: 26px; background: #fff; display: flex; align-items: center; justify-content: space-between; padding: 0 9px 0 3px; margin-bottom: 13px; }
.griddlg h2 { line-height: 14px; margin-bottom: 2px; }
fieldset { margin: 0 13px 8px; border: 1px solid #dcdcdc; padding: 2px 9px 5px 7px; min-width: 0; }
legend { padding: 0; line-height: 16px; }
textarea { display: block; width: 100%; height: 41px; resize: none; border: 1px solid #777; background: #fff; padding: 0 1px; outline: 0; overflow: hidden; }
textarea::selection { background: #0078d7; color: #fff; }
.btns { display: flex; justify-content: flex-end; gap: 15px; padding: 5px 14px 0; }

.mark { position: absolute; border: 7px solid #f00; }
.mark-a { left: 280px; top: 69px; width: 124px; height: 51px; }
.mark-b { left: 118px; top: 232px; width: 105px; height: 53px; }

.netball { position: absolute; left: 493px; top: 47px; }
.pill { display: flex; align-items: center; gap: 4px; margin: 6px 0 0 24px; padding: 0 6px 0 27px; width: 104px; height: 39px; border-radius: 20px; border: 1px solid #999; background: linear-gradient(#f4f4f4, #d0d0d0); box-shadow: 0 2px 4px rgba(0,0,0,.35); font: 10px/15px "Noto Sans", sans-serif; }
.rates span { display: flex; align-items: center; justify-content: space-between; width: 46px; }
.ball { position: absolute; left: 0; top: 0; }
.ball text { font: 13px "Noto Sans", sans-serif; fill: #fff; }
.imebar { position: absolute; left: 813px; top: 14px; width: 208px; height: 24px; background: #fff; border: 1px solid #a9bdd4; display: flex; align-items: center; gap: 7px; color: #1e74c8; }
.imebar svg:first-child { margin: -6px -2px 0 0; }
.imebar span { font: bold 15px/20px "Noto Sans CJK SC", sans-serif; }
```
